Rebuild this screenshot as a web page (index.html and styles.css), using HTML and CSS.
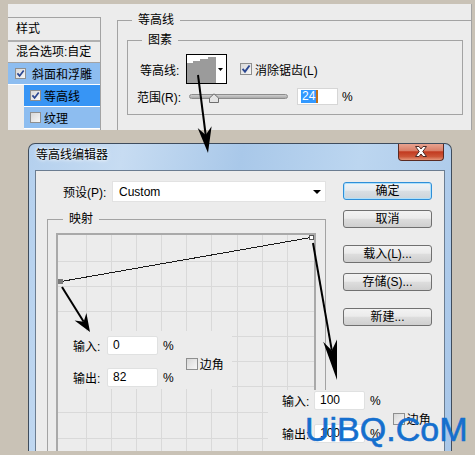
FILE: index.html
```html
<!DOCTYPE html>
<html lang="zh-CN">

<head>
    <meta charset="UTF-8">
    <title>等高线编辑器</title>
    <link rel="stylesheet" href="styles.css">
</head>

<body>

    <div class="top">
        <div class="layers">
            <div class="layer-list">
                <div class="layer-head">样式</div>
                <div class="layer-blend">混合选项:自定</div>
                <div class="layer-row sel"><span class="cb on"><svg viewBox="0 0 9 9"><path d="M1.4 4.4 3.6 6.9 7.7 1.4"/></svg></span>斜面和浮雕</div>
                <div class="layer-row sub active"><span class="cb on"><svg viewBox="0 0 9 9"><path d="M1.4 4.4 3.6 6.9 7.7 1.4"/></svg></span>等高线</div>
                <div class="layer-row sub sel"><span class="cb"></span>纹理</div>
            </div>
        </div>

        <div class="settings">
            <div class="group outer">
                <div class="group-title">等高线</div>
                <div class="group inner">
                    <div class="group-title">图素</div>
                    <div class="contour-row">
                        <span class="lbl">等高线:</span>
                        <div class="contour-thumb">
                            <svg width="39" height="28" viewBox="0 0 39 28">
                                <polygon points="0,8 6,8 6,6 13,6 13,4 21,4 21,2 29,2 29,28 0,28" fill="#9b9b9b"/>
                                <polygon points="31,13 36,13 33.5,16" fill="#000"/>
                            </svg>
                        </div>
                        <div class="check"><span class="cb big on"><svg viewBox="0 0 9 9"><path d="M1.4 4.4 3.6 6.9 7.7 1.4"/></svg></span>消除锯齿(L)</div>
                    </div>
                    <div class="range-row">
                        <span class="lbl">范围(R):</span>
                        <div class="slider">
                            <span class="track"></span>
                            <svg class="knob" width="10" height="10" viewBox="0 0 10 10"><path d="M0.5 9.5V5L5 0.8 9.5 5V9.5Z"/></svg>
                        </div>
                        <div class="num"><span class="picked">24</span><span class="caret"></span></div>
                        <span class="pct">%</span>
                    </div>
                </div>
            </div>
        </div>
    </div>

    <div class="dialog">
        <div class="titlebar">
            <span class="title">等高线编辑器</span>
            <span class="close">
                <svg width="14" height="11" viewBox="0 0 14 11"><path d="M1.5 0.5H5L7 3 9 0.5H12.5L8.8 5.5 12.5 10.5H9L7 8 5 10.5H1.5L5.2 5.5Z"/></svg>
            </span>
        </div>

        <div class="client">
            <div class="main">
                <div class="preset-row">
                    <span class="lbl">预设(P):</span>
                    <div class="select">Custom<span class="drop"></span></div>
                </div>

                <div class="group map">
                    <div class="group-title">映射</div>
                    <div class="graph">
                        <svg class="grid" width="256" height="256" viewBox="0 0 256 256">
                            <path class="lines" d="M28.5 0V256M53.5 0V256M78.5 0V256M103.5 0V256M128.5 0V256M153.5 0V256M179.5 0V256M204.5 0V256M229.5 0V256M0 26.5H256M0 51.5H256M0 76.5H256M0 101.5H256M0 126.5H256M0 151.5H256M0 177.5H256M0 203.5H256M0 228.5H256"/>
                            <path class="curve" d="M3 46.5 253 2.5"/>
                            <rect class="pt-start" x="0" y="44" width="5" height="5"/>
                            <rect class="pt-end" x="251.5" y="0.5" width="4" height="4"/>
                        </svg>

                        <div class="io-panel io-left">
                            <div class="io-fields">
                                <div class="io-row"><span class="io-lbl">输入:</span><span class="field">0</span><span class="pct">%</span></div>
                                <div class="io-row"><span class="io-lbl">输出:</span><span class="field">82</span><span class="pct">%</span></div>
                            </div>
                            <div class="corner"><span class="cb big"></span>边角</div>
                        </div>
                    </div>
                </div>
            </div>

            <div class="buttons">
                <button class="btn default">确定</button>
                <button class="btn">取消</button>
                <button class="btn gap">载入(L)...</button>
                <button class="btn">存储(S)...</button>
                <button class="btn gap">新建...</button>
            </div>

            <div class="io-panel io-right">
                <div class="io-fields">
                    <div class="io-row"><span class="io-lbl">输入:</span><span class="field">100</span><span class="pct">%</span></div>
                    <div class="io-row"><span class="io-lbl">输出:</span><span class="field">100</span><span class="pct">%</span></div>
                </div>
                <div class="corner"><span class="cb big"></span>边角</div>
            </div>
        </div>
    </div>

    <div class="watermark">UiBQ.CoM</div>

    <!-- annotation arrows drawn over the screenshot -->
    <svg class="arrows" width="475" height="455" viewBox="0 0 475 455">
        <path d="M198 75 205.7 135"/>
        <polygon points="208,153 197.7,128.1 205.7,135.1 211.6,126.3"/>
        <path d="M62 287 83.7 321.8"/>
        <polygon points="90,332 74.6,320.4 83.7,321.8 86.4,313"/>
        <path d="M313 243 331.8 350.4"/>
        <polygon points="337,380 323.2,341.8 331.8,350.4 337,339.4"/>
    </svg>

</body>

</html>
```

FILE: styles.css
```css
body {
    margin: 0;
    width: 475px;
    height: 455px;
    overflow: hidden;
    position: relative;
    background: #c9c2b6;
    font-family: "Liberation Sans", "Noto Sans CJK SC", sans-serif;
    font-size: 12px;
    color: #000;
}

/* top: layer style panel */
.top {
    margin: 4px 3px 0 8px;
    height: 126px;
    display: flex;
    background: #ececec;
    border-right: 1px solid #a3a3a3;
}

.layers {
    width: 93px;
    padding-top: 13px;
    box-sizing: border-box;
}

.layer-list {
    border-top: 1px solid #a3a3a3;
    border-right: 1px solid #a3a3a3;
    height: 112px;
    overflow: hidden;
}

.layer-head {
    height: 22px;
    line-height: 22px;
    padding-left: 8px;
    border-bottom: 2px solid #b0b0b0;
}

.layer-blend {
    height: 20px;
    line-height: 20px;
    padding-left: 8px;
    border-bottom: 1px solid #a3a3a3;
}

.layer-row {
    height: 21px;
    display: flex;
    align-items: center;
    padding-left: 7px;
    border-bottom: 1px solid #fff;
}

.layer-row .cb {
    margin-right: 6px;
}

.layer-row.sub {
    margin-left: 16px;
    padding-left: 6px;
}

.layer-row.sub .cb {
    margin-right: 3px;
}

.sel {
    background: #8dbdf0;
}

.active {
    background: #3795f5;
}

.cb {
    display: inline-block;
    width: 11px;
    height: 11px;
    box-sizing: border-box;
    border: 1px solid #8e8f8f;
    background: linear-gradient(135deg, #d8d8d8, #f7f7f7);
    flex: none;
}

.cb.big {
    width: 12px;
    height: 12px;
}

.cb svg {
    display: block;
    width: 100%;
    height: 100%;
    fill: none;
    stroke: #2b4791;
    stroke-width: 1.7;
}

.settings {
    flex: 1;
    padding: 16px 0 0 16px;
    overflow: hidden;
}

.group {
    border: 1px solid #a3a3a3;
}

.group-title {
    display: block;
    width: max-content;
    height: 16px;
    line-height: 16px;
    margin: -9px 0 0 14px;
    padding: 0 6px;
    background: #ececec;
}

.outer {
    height: 140px;
    border-right: none;
}

.inner {
    margin: 12px 0 0 9px;
    width: 336px;
    height: 75px;
    box-sizing: border-box;
}

.contour-row {
    margin-top: 6px;
    height: 30px;
    display: flex;
    align-items: center;
    padding-left: 12px;
}

.contour-row .lbl {
    width: 46px;
}

.contour-thumb {
    width: 41px;
    height: 30px;
    box-sizing: border-box;
    border: 1px solid #000;
    background: #fff;
}

.contour-thumb svg {
    display: block;
}

.check {
    margin-left: 13px;
    display: flex;
    align-items: center;
}

.check .cb {
    margin-right: 3px;
}

.range-row {
    margin-top: 4px;
    height: 17px;
    display: flex;
    align-items: center;
    padding-left: 9px;
}

.range-row .lbl {
    width: 52px;
}

.slider {
    width: 99px;
    height: 17px;
    position: relative;
    display: flex;
    align-items: center;
}

.track {
    display: block;
    width: 100%;
    height: 5px;
    box-sizing: border-box;
    border: 1px solid #8c8c8c;
    border-radius: 3px;
    background: linear-gradient(#cfcfcf, #a9a9a9);
}

.knob {
    position: absolute;
    left: 20px;
    top: 5px;
    fill: #e4e4e4;
    stroke: #6e6e6e;
    stroke-width: 1;
}

.num {
    margin-left: 9px;
    width: 41px;
    height: 17px;
    box-sizing: border-box;
    border: 1px solid #d6d6d6;
    background: #fff;
    display: flex;
    align-items: center;
    padding-left: 3px;
}

.picked {
    background: #3399ff;
    color: #fff;
    line-height: 13px;
    padding: 0 1px;
}

.caret {
    width: 2px;
    height: 13px;
    background: #c0701a;
}

.range-row .pct {
    margin-left: 4px;
}

/* dialog window */
.dialog {
    margin: 13px 0 0 28px;
    width: 424px;
    height: 308px;
    box-sizing: border-box;
    border: 1px solid #3f4c5c;
    border-bottom: none;
    border-radius: 7px 7px 0 0;
    padding: 0 6px;
    background: linear-gradient(100deg, #b4d0ee 0%, #c7dcf2 20%, #a9c8e9 45%, #bcd6f0 70%, #a8c6e8 100%);
    display: flex;
    flex-direction: column;
    overflow: hidden;
}

.titlebar {
    height: 26px;
    flex: none;
    display: flex;
    justify-content: space-between;
    align-items: flex-start;
}

.title {
    margin: 4px 0 0 1px;
    line-height: 14px;
    text-shadow: 0 0 5px #fff, 0 0 3px #fff;
}

.close {
    margin: -1px 1px 0 0;
    width: 46px;
    height: 18px;
    box-sizing: border-box;
    border: 1px solid #5a2a22;
    border-top: none;
    border-radius: 0 0 4px 4px;
    background: linear-gradient(#eaa896 0%, #d97f68 45%, #c23a20 52%, #cc5638 80%, #e4967a 100%);
    display: flex;
    align-items: center;
    justify-content: center;
}

.close svg {
    fill: #fff;
    stroke: #4a2a26;
    stroke-width: 1;
}

.client {
    flex: 1;
    position: relative;
    display: flex;
    border: 1px solid #6b7d91;
    border-bottom: none;
    background: #ececec;
}

.main {
    margin-left: 11px;
    width: 279px;
}

.preset-row {
    margin-top: 10px;
    height: 21px;
    display: flex;
    align-items: center;
    padding-left: 16px;
}

.preset-row .lbl {
    width: 49px;
}

.select {
    flex: 1;
    height: 21px;
    box-sizing: border-box;
    border: 1px solid #e2e2e2;
    background: #fff;
    padding: 0 4px 0 6px;
    display: flex;
    align-items: center;
    justify-content: space-between;
}

.drop {
    width: 0;
    height: 0;
    border-left: 4px solid transparent;
    border-right: 4px solid transparent;
    border-top: 4px solid #000;
}

.map {
    margin-top: 17px;
    height: 300px;
}

.map .group-title {
    margin-left: 15px;
}

.graph {
    margin: 6px 0 0 8px;
    width: 256px;
    height: 256px;
    border: 2px solid #a9a9a9;
    position: relative;
}

.grid {
    display: block;
}

.grid .lines {
    stroke: #d9d9d9;
    stroke-width: 1;
    fill: none;
}

.grid .curve {
    stroke: #1a1a1a;
    stroke-width: 1;
    fill: none;
    shape-rendering: crispEdges;
}

.pt-start {
    fill: #7a7a7a;
}

.pt-end {
    fill: #fff;
    stroke: #555;
    stroke-width: 1;
}

.buttons {
    margin-left: 17px;
    width: 89px;
    padding-top: 11px;
    display: flex;
    flex-direction: column;
    gap: 10px;
}

.btn {
    display: block;
    width: 89px;
    height: 18px;
    padding: 0;
    border: 1px solid #707070;
    border-radius: 3px;
    background: linear-gradient(#f3f3f3, #ebebeb 45%, #dddddd 52%, #cfcfcf);
    font-family: "Liberation Sans", "Noto Sans CJK SC", sans-serif;
    font-size: 12px;
    line-height: 16px;
    color: #000;
}

.btn.gap {
    margin-top: 7px;
}

.btn.default {
    border-color: #2f8fd8;
    box-shadow: inset 0 0 0 1px #aee0fb;
    background: linear-gradient(#f0f4f7, #e6ebef 45%, #d8dee3 52%, #cdd4da);
}

/* input / output boxes pasted over the graph */
.io-panel {
    position: absolute;
    background: #ececec;
    display: flex;
    align-items: center;
}

.io-left {
    left: 0;
    top: 96px;
    width: 174px;
    height: 58px;
    padding: 5px 0 0 15px;
    box-sizing: border-box;
    align-items: flex-start;
}

.io-right {
    left: 232px;
    top: 219px;
    right: 0;
    height: 70px;
    padding: 1px 0 0 14px;
    box-sizing: border-box;
    align-items: flex-start;
}

.io-fields {
    display: flex;
    flex-direction: column;
    gap: 13px;
}

.io-right .io-fields {
    gap: 14px;
}

.io-row {
    display: flex;
    align-items: center;
    height: 19px;
}

.io-lbl {
    width: 34px;
}

.io-right .io-lbl {
    width: 32px;
}

.field {
    width: 51px;
    height: 19px;
    box-sizing: border-box;
    border: 1px solid #e0e1e1;
    border-radius: 2px;
    background: #fff;
    padding-left: 5px;
    line-height: 17px;
}

.io-row .pct {
    margin-left: 5px;
}

.corner {
    margin: 19px 0 0 12px;
    display: flex;
    align-items: center;
}

.io-right .corner {
    margin-top: 19px;
}

.corner .cb {
    margin-right: 2px;
}

.watermark {
    position: absolute;
    left: 305px;
    top: 412px;
    font-family: "Liberation Sans", sans-serif;
    font-size: 34px;
    line-height: 34px;
    color: #156fce;
    -webkit-text-stroke: 0.6px #156fce;
}

.arrows {
    position: absolute;
    left: 0;
    top: 0;
    pointer-events: none;
}

.arrows path {
    stroke: #000;
    stroke-width: 2;
    fill: none;
}

.arrows polygon {
    fill: #000;
}
```
